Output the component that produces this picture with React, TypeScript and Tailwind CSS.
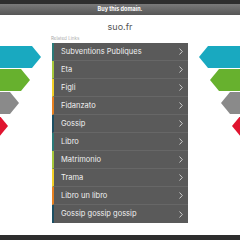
import React from "react";

const items = [
  "Subventions Publiques",
  "Eta",
  "Figli",
  "Fidanzato",
  "Gossip",
  "Libro",
  "Matrimonio",
  "Trama",
  "Libro un libro",
  "Gossip gossip gossip",
];

const borders = [
  "border-l-[#2a7a78]",
  "border-l-[#a6c83a]",
  "border-l-[#f2d027]",
  "border-l-[#e8801f]",
  "border-l-[#1c4f63]",
];

function Arrows({ flip }: { flip?: boolean }) {
  const shapes = [
    { y: 10, x: 32, c: "#19a9c0" },
    { y: 33, x: 21, c: "#67b12e" },
    { y: 56, x: 10, c: "#8a8a8a" },
    { y: 79, x: -1, c: "#e0142f" },
  ];
  return (
    <svg width="52" height="190" viewBox="0 0 52 190" className="shrink-0">
      <g transform={flip ? "translate(52,0) scale(-1,1)" : undefined}>
        {shapes.map((s, i) => (
          <polygon
            key={i}
            points={`-2,${s.y} ${s.x},${s.y} ${s.x + 9},${s.y + 11} ${s.x},${s.y + 22} -2,${s.y + 22}`}
            fill={s.c}
          />
        ))}
      </g>
    </svg>
  );
}

export default function App() {
  return (
    <div
      className="w-[240px] h-[240px] bg-white flex flex-col overflow-hidden"
      style={{ fontFamily: "Inter, 'Open Sans', sans-serif" }}
    >
      <div className="h-[4px] bg-[#2e2e2e]" />
      <div className="h-[11px] bg-gradient-to-b from-[#7a7a7a] to-[#565656] flex items-center justify-center">
        <span className="text-[5.5px] font-bold text-white leading-none">Buy this domain.</span>
      </div>
      <div className="mt-[6px] h-[10px] flex items-center justify-center text-[9px] text-[#555] leading-none">
        suo.fr
      </div>
      <div className="mt-[5px] flex flex-1">
        <Arrows />
        <div className="w-[136px] flex flex-col">
          <div className="h-[7px] flex items-center text-[4.5px] text-[#aaa] leading-none -ml-[1px]">
            Related Links
          </div>
          <div className="flex flex-col">
            {items.map((t, i) => (
              <div
                key={i}
                className={`h-[18px] bg-[#5a5a5a] border-l-2 ${borders[i % 5]} ${
                  i < items.length - 1 ? "border-b border-b-[#676767]" : ""
                } flex items-center justify-between pl-[7px] pr-[5px]`}
              >
                <span className="text-[7.5px] text-[#f0f0f0] leading-none">{t}</span>
                <svg width="4" height="7" viewBox="0 0 4 7">
                  <polyline points="0.5,0.5 3.3,3.5 0.5,6.5" fill="none" stroke="#d8d8d8" strokeWidth="0.9" />
                </svg>
              </div>
            ))}
          </div>
        </div>
        <Arrows flip />
      </div>
      <div className="h-[5px] bg-[#2e2e2e]" />
    </div>
  );
}
